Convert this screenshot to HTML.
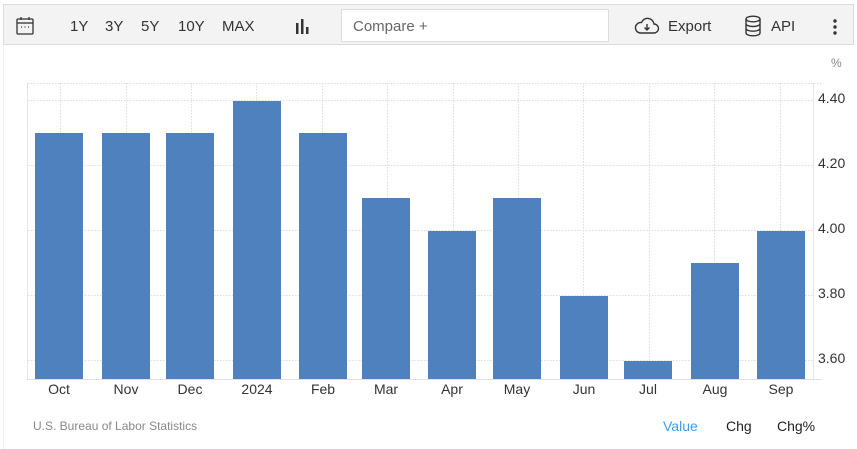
<!DOCTYPE html>
<html><head><meta charset="utf-8"><style>
body{margin:0;width:857px;height:449px;background:#fff;font-family:"Liberation Sans",Arial,sans-serif;position:relative;overflow:hidden}
.tb{position:absolute;left:3px;top:4px;width:851px;height:41px;background:#f3f3f3;border:1px solid #dcdcdc;box-sizing:border-box}
.t{position:absolute;top:18px;font-size:15px;color:#333}
.cmp{position:absolute;left:341px;top:9px;width:268px;height:33px;background:#fff;border:1px solid #ddd;box-sizing:border-box;font-size:15px;color:#666;padding:8px 0 0 11px}
.yl{position:absolute;left:818px;font-size:14px;color:#333}
.xl{position:absolute;top:381px;font-size:14px;color:#333;width:60px;text-align:center}
</style></head><body>
<div style="position:absolute;left:3px;top:45px;width:1px;height:404px;background:#f0f0f0"></div>
<div class="tb"></div>
<svg style="position:absolute;left:15px;top:16px" width="20" height="20" viewBox="0 0 20 20" fill="none" stroke="#333" stroke-width="1.3"><rect x="2" y="3" width="16" height="15" rx="1"/><line x1="2" y1="7" x2="18" y2="7"/><line x1="6" y1="1" x2="6" y2="4"/><line x1="14" y1="1" x2="14" y2="4"/><line x1="6" y1="11" x2="7" y2="11"/><line x1="9.5" y1="11" x2="10.5" y2="11"/><line x1="13" y1="11" x2="14" y2="11"/></svg>
<span class="t" style="left:70px">1Y</span><span class="t" style="left:105px">3Y</span><span class="t" style="left:141px">5Y</span><span class="t" style="left:178px">10Y</span><span class="t" style="left:222px">MAX</span>
<svg style="position:absolute;left:295px;top:18px" width="16" height="16"><rect x="1" y="5" width="2.5" height="11" fill="#333"/><rect x="6" y="1" width="2.5" height="15" fill="#333"/><rect x="11" y="9" width="2.5" height="7" fill="#333"/></svg>
<div class="cmp">Compare +</div>
<svg style="position:absolute;left:634px;top:16px" width="26" height="20" viewBox="0 0 26 20" fill="none" stroke="#333" stroke-width="1.4"><path d="M6 17h14a4.5 4.5 0 0 0 0-9a6.5 6.5 0 0 0-12.5-1.5A5 5 0 0 0 6 17z"/><path d="M13 8v6M10.5 11.5l2.5 2.5 2.5-2.5"/></svg>
<span class="t" style="left:668px">Export</span>
<svg style="position:absolute;left:744px;top:15px" width="18" height="22" viewBox="0 0 18 22" fill="none" stroke="#333" stroke-width="1.4"><ellipse cx="9" cy="4" rx="7" ry="2.8"/><path d="M2 4v14c0 1.6 3.1 2.8 7 2.8s7-1.2 7-2.8V4M2 8.7c0 1.6 3.1 2.8 7 2.8s7-1.2 7-2.8M2 13.4c0 1.6 3.1 2.8 7 2.8s7-1.2 7-2.8"/></svg>
<span class="t" style="left:771px">API</span>
<svg style="position:absolute;left:832px;top:18px" width="6" height="18"><circle cx="3" cy="3" r="1.7" fill="#333"/><circle cx="3" cy="9" r="1.7" fill="#333"/><circle cx="3" cy="15" r="1.7" fill="#333"/></svg>
<span style="position:absolute;left:831px;top:56px;font-size:12px;color:#888">%</span>
<svg style="position:absolute;left:0;top:0" width="857" height="449">
<g stroke="#ddd" stroke-dasharray="1.5,1.5" stroke-width="1">
<line x1="28" y1="83.5" x2="822" y2="83.5"/>
<line x1="28" y1="100.5" x2="813" y2="100.5"/><line x1="28" y1="165.5" x2="813" y2="165.5"/><line x1="28" y1="230.5" x2="813" y2="230.5"/><line x1="28" y1="295.5" x2="813" y2="295.5"/><line x1="28" y1="360.5" x2="813" y2="360.5"/>
<line x1="60.5" y1="83" x2="60.5" y2="379"/><line x1="126.5" y1="83" x2="126.5" y2="379"/><line x1="191.5" y1="83" x2="191.5" y2="379"/><line x1="256.5" y1="83" x2="256.5" y2="379"/><line x1="322.5" y1="83" x2="322.5" y2="379"/><line x1="387.5" y1="83" x2="387.5" y2="379"/><line x1="453.5" y1="83" x2="453.5" y2="379"/><line x1="518.5" y1="83" x2="518.5" y2="379"/><line x1="583.5" y1="83" x2="583.5" y2="379"/><line x1="649.5" y1="83" x2="649.5" y2="379"/><line x1="714.5" y1="83" x2="714.5" y2="379"/><line x1="780.5" y1="83" x2="780.5" y2="379"/>
</g>
<line x1="27.5" y1="83" x2="27.5" y2="380" stroke="#e6e6e6"/>
<line x1="813.5" y1="83" x2="813.5" y2="380" stroke="#e6e6e6"/>
<line x1="27" y1="379.5" x2="822" y2="379.5" stroke="#e0e0e0"/>
<g fill="#4e81bd">
<rect x="35" y="133" width="48" height="246"/><rect x="102" y="133" width="48" height="246"/><rect x="166" y="133" width="48" height="246"/><rect x="233" y="101" width="48" height="278"/><rect x="299" y="133" width="48" height="246"/><rect x="362" y="198" width="48" height="181"/><rect x="428" y="231" width="48" height="148"/><rect x="493" y="198" width="48" height="181"/><rect x="560" y="296" width="48" height="83"/><rect x="624" y="361" width="48" height="18"/><rect x="691" y="263" width="48" height="116"/><rect x="757" y="231" width="48" height="148"/>
</g></svg>
<span class="yl" style="top:90px">4.40</span><span class="yl" style="top:155px">4.20</span><span class="yl" style="top:220px">4.00</span><span class="yl" style="top:285px">3.80</span><span class="yl" style="top:350px">3.60</span>
<span class="xl" style="left:29px">Oct</span><span class="xl" style="left:96px">Nov</span><span class="xl" style="left:160px">Dec</span><span class="xl" style="left:227px">2024</span><span class="xl" style="left:293px">Feb</span><span class="xl" style="left:356px">Mar</span><span class="xl" style="left:422px">Apr</span><span class="xl" style="left:487px">May</span><span class="xl" style="left:554px">Jun</span><span class="xl" style="left:618px">Jul</span><span class="xl" style="left:685px">Aug</span><span class="xl" style="left:751px">Sep</span>
<span style="position:absolute;left:33px;top:419px;font-size:12px;color:#888">U.S. Bureau of Labor Statistics</span>
<span style="position:absolute;left:663px;top:418px;font-size:14px;color:#3c9cf0">Value</span>
<span style="position:absolute;left:726px;top:418px;font-size:14px;color:#222">Chg</span>
<span style="position:absolute;left:777px;top:418px;font-size:14px;color:#222">Chg%</span>
</body></html>
